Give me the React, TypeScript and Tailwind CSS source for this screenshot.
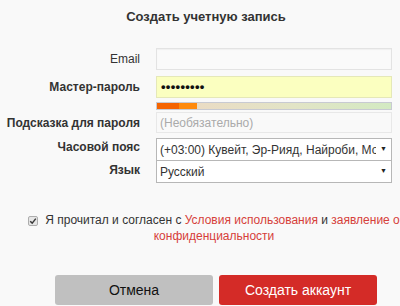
export default function App() {
  const label =
    "w-[140px] shrink-0 text-right text-[12px] font-bold text-[#333]";
  return (
    <div
      className="w-[400px] h-[306px] bg-[#f9f9f9] text-[#333] overflow-hidden"
      style={{ fontFamily: '"Liberation Sans", Arial, sans-serif' }}
    >
      <h1 className="pt-[9px] pl-[12px] text-center text-[13px] font-bold leading-[15px] text-[#333]">
        Создать учетную запись
      </h1>

      <div className="mt-[24px] flex flex-col pr-[8px]">
        {/* Email */}
        <div className="flex items-center gap-[16px]">
          <span className={label + " font-normal"}>Email</span>
          <div className="h-[22px] min-w-0 flex-1 border border-[#e3e3e3] bg-[#fafafa] shadow-[inset_0_1px_1px_rgba(0,0,0,0.04)]" />
        </div>

        {/* Master password */}
        <div className="mt-[6px] flex items-center gap-[16px]">
          <span className={label}>Мастер-пароль</span>
          <div className="flex h-[22px] min-w-0 flex-1 items-center border border-[#e5e8b8] bg-[#fbffc0] px-[4px] text-[13px] font-bold tracking-[0.3px] text-[#111]">
            •••••••••
          </div>
        </div>

        {/* Strength meter */}
        <div className="mt-[4px] flex gap-[16px]">
          <span className="w-[140px] shrink-0" />
          <div className="flex h-[8px] min-w-0 flex-1 border border-[#c8cad2]">
            <div className="w-[22px] bg-[#f56400]" />
            <div className="w-[18px] bg-[#ff8a0c]" />
            <div className="flex-1 bg-gradient-to-r from-[#eadcc4] via-[#e2e4c6] to-[#d3eac2]" />
          </div>
        </div>

        {/* Hint */}
        <div className="mt-[2px] flex items-center gap-[16px]">
          <span className={label}>Подсказка для пароля</span>
          <div className="flex h-[21px] min-w-0 flex-1 items-center border border-[#e8e8e8] bg-[#f9f9f9] px-[3px] text-[12px] text-[#aaa]">
            (Необязательно)
          </div>
        </div>

        {/* Time zone */}
        <div className="mt-[5px] flex items-center gap-[16px]">
          <span className={label + " -mt-[6px]"}>Часовой пояс</span>
          <div className="flex h-[23px] min-w-0 flex-1 items-center border border-[#b7b7b7] bg-white pl-[3px] pr-[4px] text-[12px] text-[#333]">
            <span className="min-w-0 flex-1 overflow-hidden whitespace-nowrap">
              (+03:00) Кувейт, Эр-Рияд, Найроби, Москва
            </span>
            <span className="ml-[4px] text-[7px] text-[#222]">▼</span>
          </div>
        </div>

        {/* Language */}
        <div className="-mt-px flex items-center gap-[16px]">
          <span className={label + " -mt-[3px]"}>Язык</span>
          <div className="flex h-[23px] min-w-0 flex-1 items-center border border-[#b7b7b7] bg-white pl-[3px] pr-[4px] text-[12px] text-[#333]">
            <span className="flex-1">Русский</span>
            <span className="text-[7px] text-[#222]">▼</span>
          </div>
        </div>
      </div>

      {/* Terms */}
      <p className="ml-[28px] mt-[29px] w-[372px] whitespace-nowrap text-center text-[12px] leading-[16px] text-[#333]">
        <span className="mr-[7px] inline-flex h-[10px] w-[10px] items-center justify-center rounded-[2px] border border-[#adadad] bg-[#e6e6e6] align-[-1px]">
          <svg viewBox="0 0 10 10" className="h-[8px] w-[8px]">
            <path
              d="M1.5 5.2 L4 7.6 L8.5 2"
              fill="none"
              stroke="#3a3a3a"
              strokeWidth="1.8"
            />
          </svg>
        </span>
        Я прочитал и согласен с{" "}
        <span className="text-[#d6403a]">Условия использования</span> и{" "}
        <span className="text-[#d6403a]">заявление о</span>
        <br />
        <span className="text-[#d6403a]">конфиденциальности</span>
      </p>

      {/* Buttons */}
      <div className="mt-[31px] flex gap-[6px] pl-[55px]">
        <button className="h-[30px] w-[158px] rounded-[3px] bg-[#c0c0c0] text-[14px] text-[#111]">
          Отмена
        </button>
        <button className="h-[30px] w-[158px] rounded-[3px] bg-[#d42b27] text-[14px] text-white">
          Создать аккаунт
        </button>
      </div>
    </div>
  );
}
